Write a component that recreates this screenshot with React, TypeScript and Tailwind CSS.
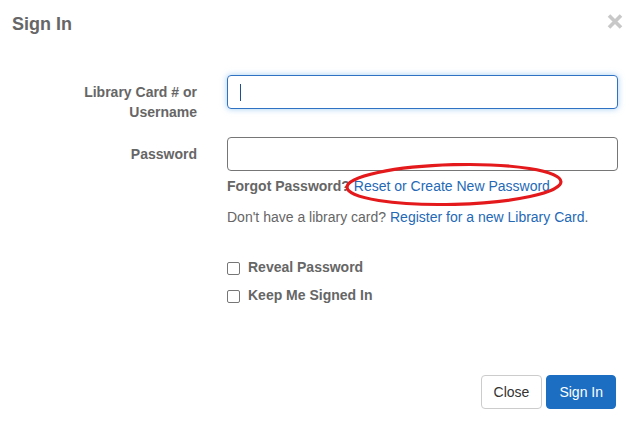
import React from "react";

export default function App() {
  return (
    <div
      className="relative flex h-[424px] w-[635px] flex-col overflow-hidden bg-white text-[14px] text-[#666]"
      style={{ fontFamily: '"Liberation Sans", Arial, sans-serif' }}
    >
      {/* Header */}
      <div className="flex items-start justify-between pl-[12px] pr-[12px] pt-[11px]">
        <h4 className="text-[18px] font-bold leading-[26px] text-[#666]">Sign In</h4>
        <button className="mt-[2px] flex h-[16px] w-[16px] items-center justify-center" aria-label="Close">
          <svg width="16" height="15" viewBox="0 0 16 15">
            <path d="M2 1.5 L14 13.5 M14 1.5 L2 13.5" stroke="#c8c8c8" strokeWidth="3.6" strokeLinecap="butt" />
          </svg>
        </button>
      </div>

      {/* Body */}
      <div className="mt-[38px] grid grid-cols-[185px_1fr] gap-x-[30px] pl-[12px] pr-[17px]">
        <label className="pt-[7px] text-right font-bold leading-5">
          Library Card # or
          <br />
          Username
        </label>
        <div className="relative h-[34px] rounded-[4px] border border-[#2f72c4] shadow-[0_0_6px_rgba(102,175,233,0.6)]">
          <span className="absolute left-[12px] top-[8px] h-[17px] w-px bg-[#1f4f8f]" />
        </div>

        <label className="mt-[15px] pt-[7px] text-right font-bold leading-5">Password</label>
        <div className="mt-[15px] h-[34px] rounded-[4px] border border-[#767676]" />

        <div />
        <div className="leading-5">
          <p className="mt-[5px]">
            <span className="font-bold">Forgot Password?</span>{" "}
            <a className="text-[#2469b6]">Reset or Create New Password</a>
          </p>
          <p className="mt-[11px]">
            Don't have a library card? <a className="text-[#2469b6]">Register for a new Library Card</a>.
          </p>
          <div className="mt-[30px] flex items-center">
            <span className="mt-[3px] h-[13px] w-[13px] rounded-[2px] border border-[#767676] bg-white" />
            <span className="ml-[8px] font-bold">Reveal Password</span>
          </div>
          <div className="mt-[8px] flex items-center">
            <span className="mt-[3px] h-[13px] w-[13px] rounded-[2px] border border-[#767676] bg-white" />
            <span className="ml-[8px] font-bold">Keep Me Signed In</span>
          </div>
        </div>
      </div>

      {/* Footer */}
      <div className="mt-auto flex justify-end gap-[4px] pb-[15px] pr-[19px]">
        <button className="h-[34px] rounded-[4px] border border-[#ccc] bg-white px-[12px] leading-5 text-[#333]">
          Close
        </button>
        <button className="h-[34px] rounded-[4px] border border-[#1b6ec2] bg-[#1b6ec2] px-[12px] leading-5 text-white">
          Sign In
        </button>
      </div>

      {/* Red annotation ellipse */}
      <svg className="pointer-events-none absolute left-0 top-0" width="635" height="424">
        <ellipse
          cx="454"
          cy="184.5"
          rx="107"
          ry="19.8"
          transform="rotate(-1.5 454 184.5)"
          fill="none"
          stroke="#e3191c"
          strokeWidth="3.2"
        />
      </svg>
    </div>
  );
}
